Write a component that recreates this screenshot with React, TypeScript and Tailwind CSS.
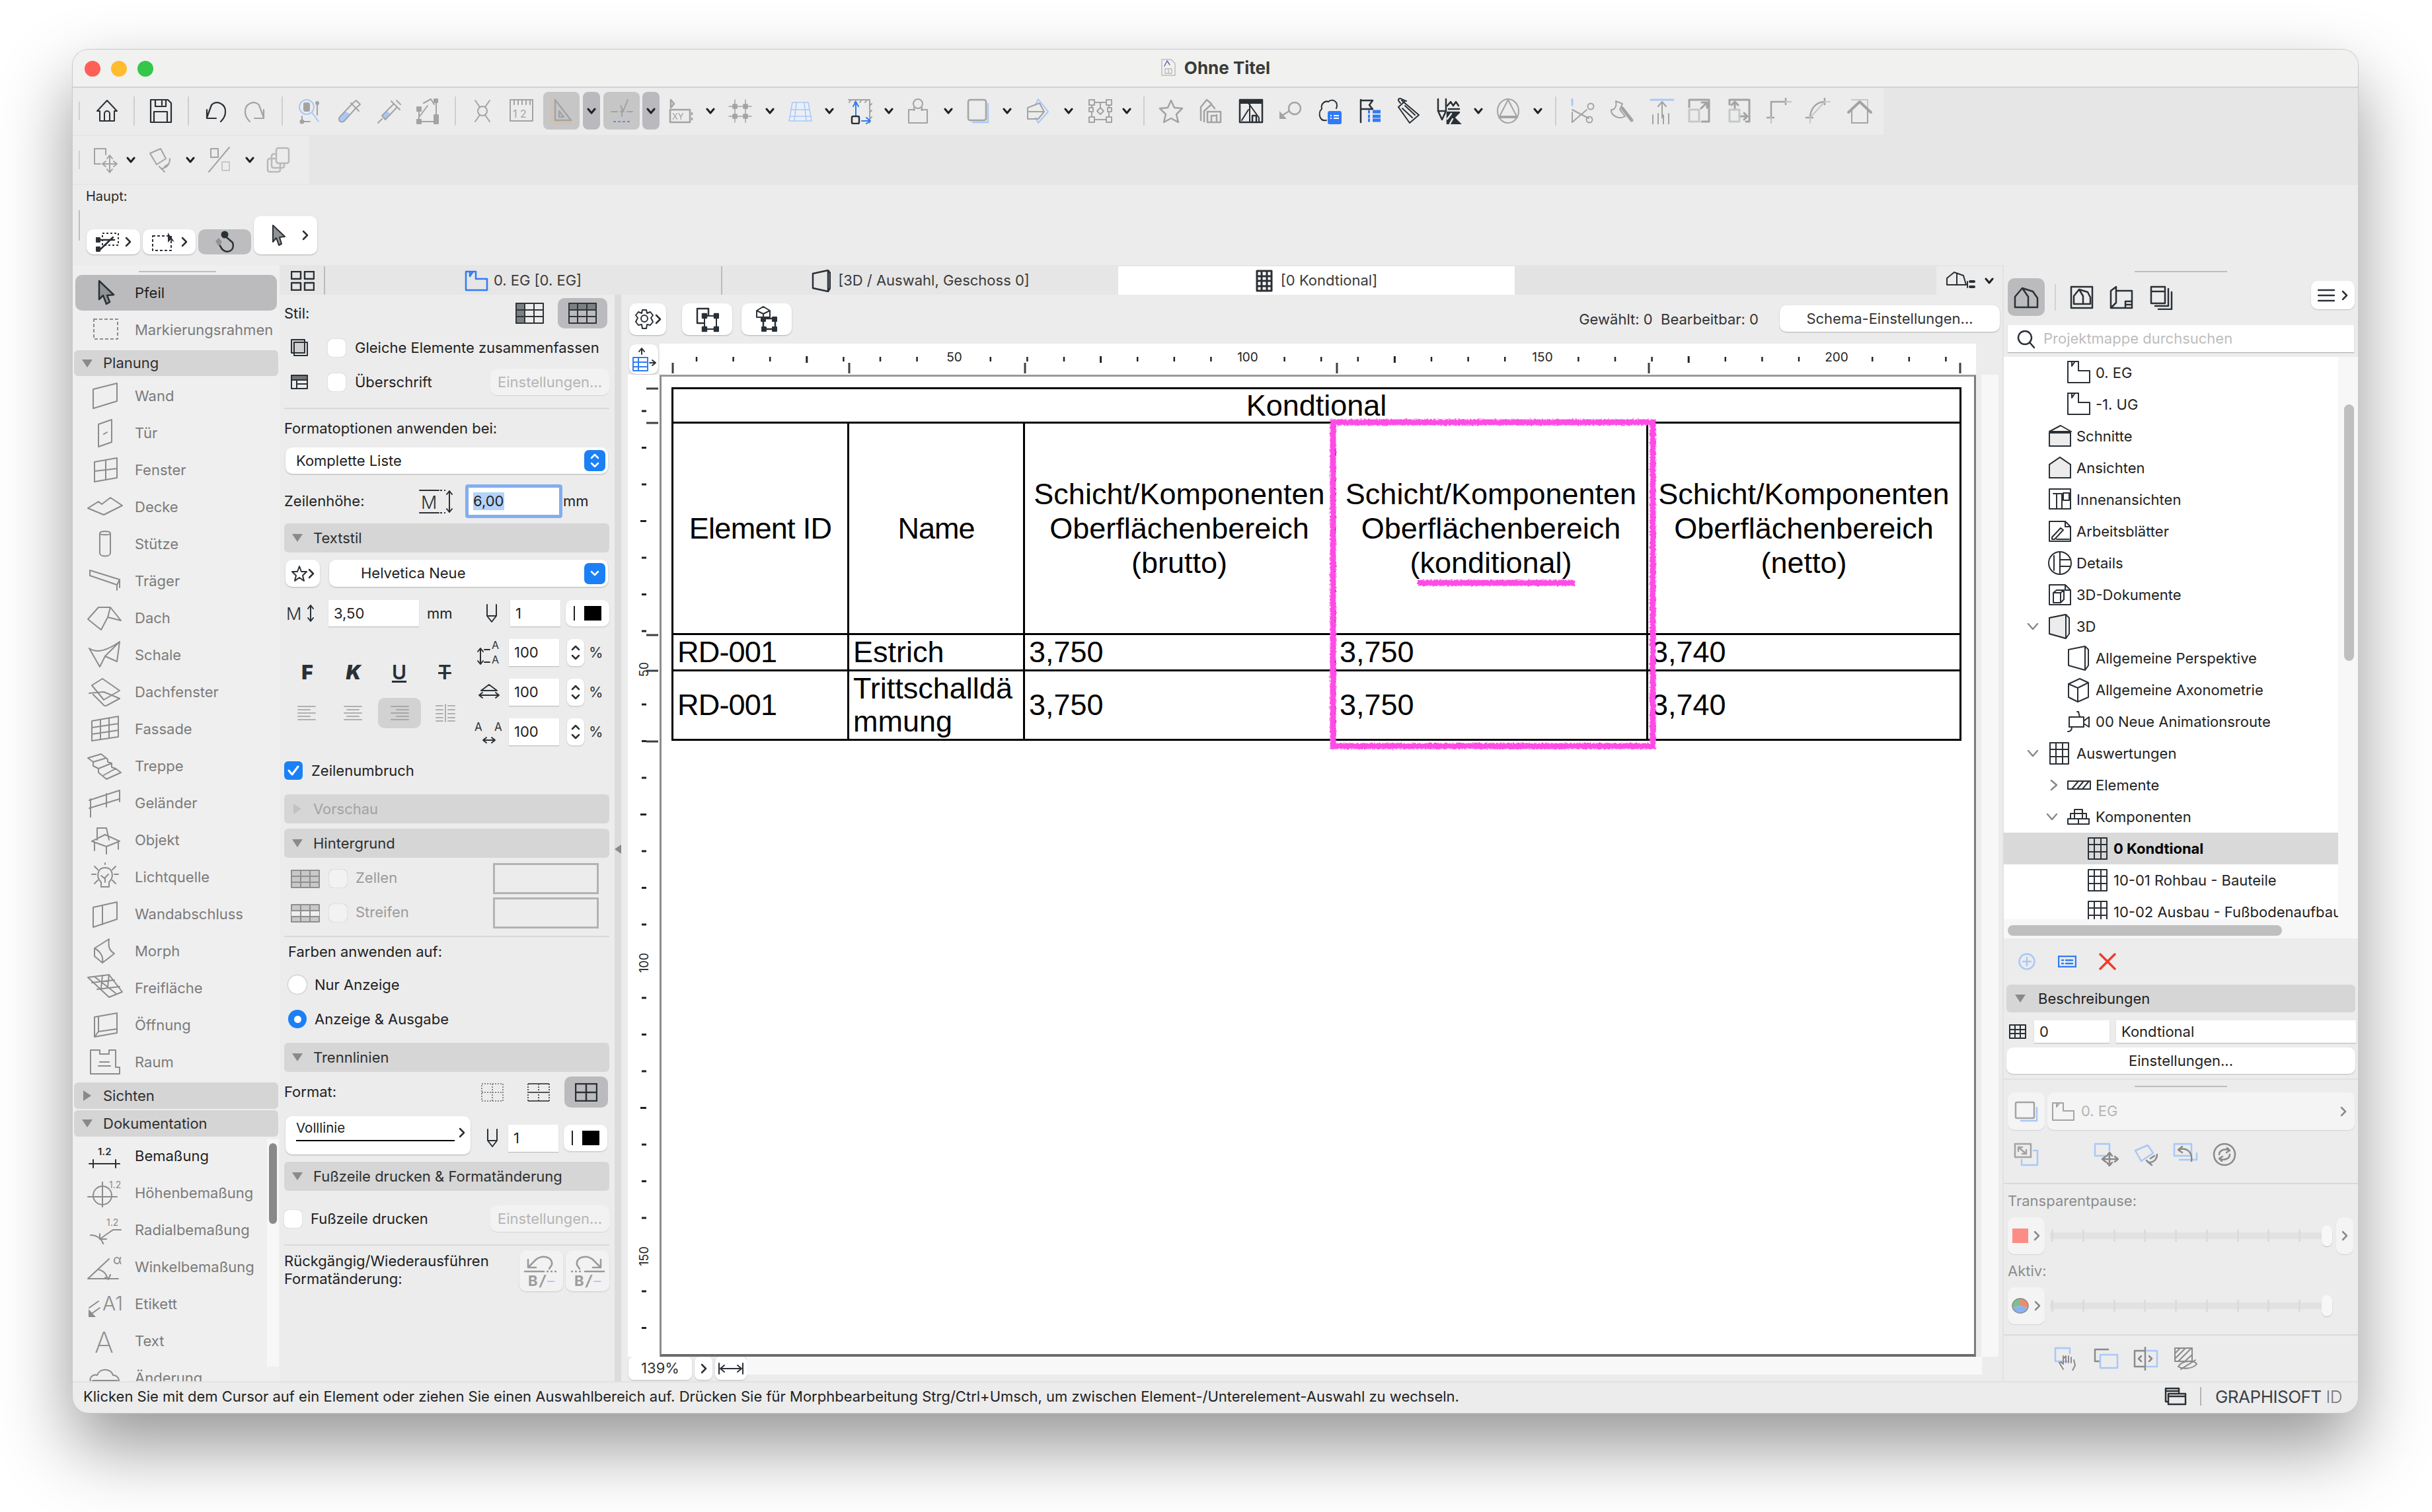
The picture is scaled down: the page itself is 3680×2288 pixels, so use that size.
import type { ReactNode } from 'react';

const DK = '#2a3036';
const GR = '#a3a3a3';
const LB = '#a9c8f7';
const BL = '#2f7bf6';
const TI = '#8c8c8c';

function S({ w = 40, h = 40, c = DK, sw = 2, d, children, className = '' }: { w?: number; h?: number; c?: string; sw?: number; d?: string; children?: ReactNode; className?: string }) {
  return (
    <svg width={w} height={h} viewBox={`0 0 ${w} ${h}`} fill="none" stroke={c} strokeWidth={sw} strokeLinecap="round" strokeLinejoin="round" className={`shrink-0 ${className}`}>
      {d && <path d={d} />}
      {children}
    </svg>
  );
}

const Tiny = ({ x, y, s, t, c, fw = 400 }: { x: number; y: number; s: number; t: string; c: string; fw?: number }) => (
  <text x={x} y={y} fontSize={s} fontWeight={fw} fill={c} stroke="none" fontFamily="Inter, sans-serif">{t}</text>
);

const Chev = () => <S w={14} h={10} sw={3} c="#1e2226" d="M2 2 L7 8 L12 2" />;
const Caret = ({ c = '#2a3036' }: { c?: string }) => <S w={10} h={16} sw={2.5} c={c} d="M2 2 L8 8 L2 14" />;

function Slot({ className, children }: { className: string; children?: ReactNode }) {
  return <div className={`flex items-center justify-center shrink-0 h-full ${className}`}>{children}</div>;
}
const TbDiv = ({ h = 'h-[44px]' }: { h?: string }) => <div className={`w-[2px] bg-[#cfcfcf] ${h}`} />;

const icons = {
  home: <S d="M20 4 L5 20 H9 V35 H31 V20 H35 Z M16 35 V24 A4 4 0 0 1 24 24 V35" />,
  save: <S d="M5 3 H31 L36 8 V37 H5 Z M12 3 V13 H28 V3 M22 5 V11 M10 37 V21 H30 V37" sw={2.2} />,
  undo: <S d="M7 30 L14 11 C20 3 36 8 35 22 C35 28 31 33 28 36 M7 18 V31 H21" sw={2.2} />,
  redo: <S c={GR} d="M33 30 L26 11 C20 3 4 8 5 22 C5 28 9 33 12 36 M33 18 V31 H19" sw={2.2} />,
  mag: <S c={GR}><circle cx="15" cy="14" r="11" stroke={LB} /><rect x="10" y="7" width="10" height="14" rx="3" fill={GR} stroke="none" /><path d="M23 22 L33 36" stroke={LB} /><path d="M31 8 V26 M8 28 V36 H20" /><circle cx="31" cy="8" r="2" fill={GR} /><circle cx="8" cy="36" r="2.5" fill={GR} /></S>,
  pip: <S c={GR}><path d="M5 29 L13 20 L21 25 L12 35 A4 4 0 0 1 5 29Z" fill={LB} stroke="none" /><path d="M30 4 L36 10 L30 15 L12 35 A4 4 0 0 1 5 29 L25 8 Z M22 8 L34 20" /></S>,
  syr: <S c={GR}><path d="M9 27 L17 20 L22 25 L14 33Z" fill={LB} stroke="none" /><path d="M3 38 L9 32 M9 27 L27 9 L32 14 L14 33 Z M23 5 L36 18 M31 4 L37 10" /></S>,
  ham: <S c={GR}><path d="M7 16 V36 H33 V4 M8 28 L20 12 M14 8 L25 2 L30 10" sw={2.5} /><rect x="4" y="14" width="6" height="6" fill={GR} /><rect x="30" y="2" width="5" height="5" fill={GR} /><rect x="30" y="26" width="6" height="6" fill={GR} /><rect x="4" y="33" width="6" height="6" fill={GR} /><rect x="30" y="33" width="6" height="6" fill={GR} /></S>,
  xc: <S c={GR} d="M9 4 L16 14 M31 4 L24 14 M9 36 L16 26 M31 36 L24 26"><circle cx="20" cy="20" r="7" /></S>,
  rul: <S c={GR} d="M3 3 H37 V35 H3 Z M9 3 V10 M15 3 V10 M21 3 V10 M27 3 V10 M33 3 V10"><Tiny x={7} y={30} s={16} t="1 2" c={GR} /></S>,
  tri: <S c={GR} d="M10 3 L10 34 H34 Z M16 20 V29 H23 Z" sw={2.5}><path d="M5 4 V38 H37" stroke="#e7b98d" strokeDasharray="3 3" strokeLinecap="butt" /></S>,
  snp: <S c={GR} d="M4 21 H13 M18 21 H23 M28 21 H36 M20 15 V28 M18 12 L22 20 L29 3"><path d="M7 36 H34" stroke={BL} strokeDasharray="4 3" strokeLinecap="butt" opacity="0.7" /></S>,
  xy: <S c={GR} d="M5 3 V15 L10 9 Z M4 18 H34 V37 H4 Z M37 23 V25 M37 31 V33" sw={2.5}><Tiny x={7} y={33} s={13} t="XY" c={GR} /></S>,
  grd: <S c={GR} sw={1.5} d="M12 3 V37 M28 3 V37 M3 13 H37 M3 28 H37"><rect x="9" y="10" width="6" height="6" fill={GR} /><rect x="25" y="10" width="6" height="6" fill={GR} /><rect x="9" y="25" width="6" height="6" fill={GR} /><rect x="25" y="25" width="6" height="6" fill={GR} /></S>,
  tbl: <S c={LB} sw={1.5}><path d="M8 7 H32 L37 35 H3 Z" fill="#eaeff7" /><path d="M14 7 L11 35 M26 7 L29 35 M6 18 H34 M4 28 H36" /></S>,
  ele: <S c={GR} d="M4 3 H36 M36 3 V38 M8 3 L5 7 M16 3 L13 7 M24 3 L21 7 M32 3 L29 7 M36 12 L39 9 M36 22 L39 19 M36 32 L39 29"><path d="M15 28 V8 M11 13 L15 6 L19 13 M24 35 H36 M31 30 L37 35 L31 39" stroke={BL} /><rect x="9" y="28" width="11" height="11" rx="2" stroke={DK} strokeWidth="2.5" /></S>,
  per: <S c={GR} d="M6 18 H15 M25 18 H34 M6 18 V38 H34 V18"><circle cx="20" cy="9" r="7" /><path d="M14 15 V19 M26 15 V19" /></S>,
  rct: <S c={GR} sw={2.5}><path d="M36 9 V37 H13" stroke={LB} /><rect x="6" y="3" width="27" height="31" rx="3" /></S>,
  rmb: <S c={GR} sw={2}><path d="M21 2 L36 21 L21 38 L17 30 M21 2 L17 10" stroke={LB} /><path d="M5 15 L23 8 L30 21 L21 32 L5 32 Z M5 21 H30" /></S>,
  nod: <S c={GR} d="M7 7 H33 V33 H7 Z M20 15 L25 20 L20 25 L15 20Z M20 7 V15"><rect x="3" y="3" width="8" height="8" fill="#ececec" /><rect x="29" y="3" width="8" height="8" fill="#ececec" /><rect x="3" y="29" width="8" height="8" fill="#ececec" /><rect x="29" y="29" width="8" height="8" fill="#ececec" /><rect x="3" y="15" width="6" height="6" fill="#ececec" /><rect x="31" y="15" width="6" height="6" fill="#ececec" /></S>,
  str: <S c={GR} sw={2.5} d="M20 4 L25 15 L37 16 L28 25 L31 37 L20 31 L9 37 L12 25 L3 16 L15 15 Z" />,
  hst: <S c={GR} sw={2.5} d="M6 34 V14 L15 3 L22 9 M11 36 V20 L22 10 L27 16 M16 37 V21 H36 V37 Z M22 37 V27 H28 M30 37 V26" />,
  hel: <S><rect x="3" y="3" width="34" height="34" strokeWidth="2.5" /><rect x="3" y="3" width="34" height="5" fill={DK} /><path d="M16 8 L32 30 V37 H18 V8 M6 34 L16 18" /><path d="M22 37 V27 H28 V37" strokeWidth="2.5" /></S>,
  key: <S c={GR} sw={2.5} d="M18 20 L8 26"><circle cx="26" cy="16" r="9" /><path d="M3 20 V32 H14 Z" fill={GR} stroke="none" /></S>,
  cld: <S><path d="M15 34 C4 36 2 22 8 17 C6 8 14 4 18 6 C24 0 34 6 30 16 M15 34" strokeWidth="2" /><rect x="17" y="20" width="21" height="20" rx="3" fill={BL} stroke="none" /><path d="M21 27 H23 M26 27 H34 M21 31 H23 M26 31 H34" stroke="#fff" strokeWidth="2" strokeLinecap="butt" /></S>,
  flg: <S d="M6 3 V37 M6 4 H24 L19 11 L24 17 H6" sw={2.5}><path d="M17 21 H20 M24 21 H36 M17 28 H20 M24 28 H36 M17 34 H20 M24 34 H36" stroke={BL} strokeWidth="5" strokeLinecap="butt" /></S>,
  tag: <S d="M8 8 C2 2 6 -1 12 3 L17 5 M10 4 L36 26 L22 38 L5 14 L14 6 M15 12 L30 26 M11 16 L26 30" sw={2} />,
  pen: <S d="M4 2 V20 L10 33 L16 20 V2 M4 20 H16 M18 12 L23 6 L27 12 L31 6 L35 12 M20 17 H36" sw={2.5}><path d="M18 22 H36 L28 30 L38 40 H18 Z" fill={DK} /><path d="M24 24 L18 32 M26 32 L22 39" stroke="#ececec" /></S>,
  cir: <S c={GR} d="M20 3 L33 28 H7 Z M6 30 H34"><ellipse cx="20" cy="20" rx="16" ry="18" /></S>,
  sci: <S c={GR} d="M4 18 L29 31 M4 37 L26 18 M4 22 V37"><path d="M4 2 V11" stroke={LB} strokeWidth="3" /><circle cx="32" cy="13" r="4.5" /><circle cx="30" cy="33" r="4.5" /></S>,
  axe: <S c={GR} d="M12 5 L22 9 L18 18 L26 28 C16 34 4 26 5 18 C9 19 14 14 12 5 Z"><path d="M22 16 L36 34" strokeWidth="5" /></S>,
  top: <S c={GR} d="M20 30 V6 M14 13 L20 6 L26 13 M6 26 V40 M14 24 V40 M22 26 V40 M30 24 V40" sw={2}><path d="M3 3 H37" stroke={LB} strokeWidth="3" /></S>,
  ext: <S c={GR} sw={3} d="M3 14 V3 H33 V36 H22 M21 16 L30 7 M22 7 H30 V15"><rect x="3" y="18" width="15" height="18" stroke="#c6c8c8" /></S>,
  est: <S c={GR} sw={3} d="M3 10 V3 H33 V36 H28 M11 18 V6 M6 11 L11 6 M16 11 L11 6 M18 28 H29 M25 23 L30 28 L25 33"><rect x="3" y="18" width="15" height="18" stroke="#c6c8c8" /></S>,
  cor: <S c={GR} sw={2.5} d="M8 30 V6 H30 M30 0 V10 M2 30 H12"><path d="M30 6 H38 M8 30 V38" stroke="#c6c8c8" /></S>,
  arc: <S c={GR} sw={2.5} d="M8 30 C8 16 18 6 30 6 M30 0 V10 M2 30 H12"><path d="M30 6 H38 M8 30 V38 M8 30 L30 6" stroke="#c6c8c8" strokeWidth="2" /></S>,
  hou: <S c={GR} d="M8 16 V38 H32 V16"><path d="M8 3 H32 V16" stroke="#c6c8c8" /><path d="M3 22 L20 6 L37 22" strokeWidth="4" /></S>,
  mov: <S c={GR} d="M14 26 H5 V3 H22 V12 M28 14 V38 M18 26 H38 M24 18 L28 13 L32 18 M24 34 L28 39 L32 34 M22 22 L17 26 L22 30 M34 22 L39 26 L34 30" />,
  rot: <S c={GR} d="M4 10 L20 3 L28 18 L14 27 Z M34 18 C34 26 30 32 22 33 M18 30 L22 34 L26 38 M26 30 L32 26" />,
  mir: <S c={GR} d="M3 38 L34 1"><rect x="6" y="3" width="11" height="13" /><rect x="23" y="23" width="11" height="13" stroke="#c6c8c8" /></S>,
  cop: <S c="#b9b9b9" sw={2.5}><rect x="4" y="18" width="19" height="20" rx="3" /><rect x="10" y="11" width="19" height="21" rx="3" /><rect x="17" y="2" width="19" height="23" rx="3" fill="#ececec" /></S>,
};

const tbBtn = 'rounded-[8px] bg-[#c6c6c6]';

function ToolbarOne() {
  return (
    <div className="flex h-[71px] bg-[#e6e6e6] shrink-0">
      <div className="flex items-center w-[2740px] h-full pb-[2px] bg-[#ececec]">
        <Slot className="w-[20px]"><TbDiv h="h-[28px]" /></Slot>
        <Slot className="w-[64px]">{icons.home}</Slot>
        <Slot className="w-[18px]"><TbDiv /></Slot>
        <Slot className="w-[62px]">{icons.save}</Slot>
        <Slot className="w-[22px]"><TbDiv /></Slot>
        <Slot className="w-[60px]">{icons.undo}</Slot>
        <Slot className="w-[60px]">{icons.redo}</Slot>
        <Slot className="w-[22px]"><TbDiv /></Slot>
        <Slot className="w-[62px]">{icons.mag}</Slot>
        <Slot className="w-[58px]">{icons.pip}</Slot>
        <Slot className="w-[62px]">{icons.syr}</Slot>
        <Slot className="w-[54px]">{icons.ham}</Slot>
        <Slot className="w-[30px]"><TbDiv /></Slot>
        <Slot className="w-[52px]">{icons.xc}</Slot>
        <Slot className="w-[66px]">{icons.rul}</Slot>
        <div className={`${tbBtn} flex items-center justify-center w-[55px] h-[57px]`}>{icons.tri}</div>
        <div className="flex items-center justify-center w-[26px] h-[57px] ml-[5px] rounded-[8px] bg-[#b9b9be]"><Chev /></div>
        <div className={`${tbBtn} flex items-center justify-center w-[55px] h-[57px] ml-[5px]`}>{icons.snp}</div>
        <div className="flex items-center justify-center w-[26px] h-[57px] ml-[4px] rounded-[8px] bg-[#b9b9be]"><Chev /></div>
        <Slot className="w-[64px]">{icons.xy}</Slot>
        <Slot className="w-[26px]"><Chev /></Slot>
        <Slot className="w-[64px]">{icons.grd}</Slot>
        <Slot className="w-[26px]"><Chev /></Slot>
        <Slot className="w-[66px]">{icons.tbl}</Slot>
        <Slot className="w-[22px]"><Chev /></Slot>
        <Slot className="w-[68px]">{icons.ele}</Slot>
        <Slot className="w-[22px]"><Chev /></Slot>
        <Slot className="w-[66px]">{icons.per}</Slot>
        <Slot className="w-[26px]"><Chev /></Slot>
        <Slot className="w-[62px]">{icons.rct}</Slot>
        <Slot className="w-[28px]"><Chev /></Slot>
        <Slot className="w-[64px]">{icons.rmb}</Slot>
        <Slot className="w-[30px]"><Chev /></Slot>
        <Slot className="w-[66px]">{icons.nod}</Slot>
        <Slot className="w-[14px]"><Chev /></Slot>
        <Slot className="w-[38px]"><TbDiv /></Slot>
        <Slot className="w-[44px]">{icons.str}</Slot>
        <Slot className="w-[74px]">{icons.hst}</Slot>
        <Slot className="w-[50px]">{icons.hel}</Slot>
        <Slot className="w-[70px]">{icons.key}</Slot>
        <Slot className="w-[48px]">{icons.cld}</Slot>
        <Slot className="w-[74px]">{icons.flg}</Slot>
        <Slot className="w-[42px]">{icons.tag}</Slot>
        <Slot className="w-[80px]">{icons.pen}</Slot>
        <Slot className="w-[10px]"><Chev /></Slot>
        <Slot className="w-[80px]">{icons.cir}</Slot>
        <Slot className="w-[10px]"><Chev /></Slot>
        <Slot className="w-[44px]"><TbDiv /></Slot>
        <Slot className="w-[38px]">{icons.sci}</Slot>
        <Slot className="w-[78px]">{icons.axe}</Slot>
        <Slot className="w-[46px]">{icons.top}</Slot>
        <Slot className="w-[70px]">{icons.ext}</Slot>
        <Slot className="w-[52px]">{icons.est}</Slot>
        <Slot className="w-[64px]">{icons.cor}</Slot>
        <Slot className="w-[54px]">{icons.arc}</Slot>
        <Slot className="w-[72px]">{icons.hou}</Slot>
      </div>
    </div>
  );
}

function ToolbarTwo() {
  return (
    <div className="h-[76px] bg-[#e6e6e6] pt-[2px] shrink-0">
      <div className="flex items-center w-[358px] h-[72px] bg-[#ececec]">
        <Slot className="w-[20px]"><TbDiv h="h-[28px]" /></Slot>
        <Slot className="w-[56px]">{icons.mov}</Slot>
        <Slot className="w-[24px]"><Chev /></Slot>
        <Slot className="w-[66px]">{icons.rot}</Slot>
        <Slot className="w-[24px]"><Chev /></Slot>
        <Slot className="w-[66px]">{icons.mir}</Slot>
        <Slot className="w-[24px]"><Chev /></Slot>
        <Slot className="w-[62px]">{icons.cop}</Slot>
      </div>
    </div>
  );
}

function HauptRow() {
  const white = 'flex items-center justify-center bg-white rounded-[10px] shadow-[0_1px_2px_rgba(0,0,0,0.25)]';
  return (
    <div className="relative h-[121px] bg-[#ececec] shrink-0">
      <div className="pl-[20px] pt-[5px] text-[20px] leading-[24px] text-[#2a2a2a]">Haupt:</div>
      <div className="absolute left-[9px] top-[38px] w-[2px] h-[46px] bg-[#bdbdbd]" />
      <div className="absolute left-[21px] top-[47px] flex items-end gap-[4px]">
        <div className={`${white} gap-[8px] w-[81px] h-[38px]`}>
          <S w={36} h={30}><rect x="10" y="2" width="24" height="18" strokeDasharray="3 3" strokeLinecap="butt" /><path d="M2 12 H28 M5 28 L26 8" strokeWidth="2.5" /><rect x="0" y="9" width="6" height="6" fill={DK} /><rect x="1" y="23" width="5" height="6" fill={DK} /></S>
          <Caret />
        </div>
        <div className={`${white} gap-[8px] w-[80px] h-[38px]`}>
          <S w={38} h={30}><rect x="3" y="6" width="28" height="22" strokeDasharray="4 3" strokeLinecap="butt" /><path d="M26 1 L26 16 L30 12 L36 15 L31 8 Z" fill={DK} stroke="none" /></S>
          <Caret />
        </div>
        <div className="flex items-center justify-center w-[80px] h-[38px] rounded-[10px] bg-[#bdbdbf]">
          <S w={36} h={34}><path d="M16 6 L30 18 C34 30 22 36 14 28 L8 18" strokeWidth="2.5" /><circle cx="18" cy="6" r="4.5" fill={DK} /><path d="M4 16 L9 11 L14 17 L9 24 Z" fill="#8f9394" stroke="none" /></S>
        </div>
        <div className={`${white} gap-[24px] w-[96px] h-[58px] pl-[12px]`}>
          <S w={24} h={34}><path d="M4 2 V27 L9 21 L13 32 L17 30 L14 20 L22 19 Z" fill="#8f9394" /></S>
          <Caret />
        </div>
      </div>
    </div>
  );
}

function Tool({ icon, t, dark }: { icon: ReactNode; t: string; dark?: boolean }) {
  return (
    <div className="flex items-center h-[56px] shrink-0">
      <div className="flex items-center justify-center w-[56px] h-[44px] ml-[21px] mr-[17px] shrink-0">{icon}</div>
      <span className={`text-[22px] whitespace-nowrap ${dark ? 'text-[#1f1f1f]' : 'text-[#7b7b7b]'}`}>{t}</span>
    </div>
  );
}

function TriDown({ c = '#8a8a8a' }: { c?: string }) {
  return <svg width="18" height="14" viewBox="0 0 18 14" className="shrink-0"><path d="M1 1 H17 L9 13 Z" fill={c} /></svg>;
}
function TriRight({ c = '#8a8a8a' }: { c?: string }) {
  return <svg width="14" height="18" viewBox="0 0 14 18" className="shrink-0"><path d="M1 1 V17 L13 9 Z" fill={c} /></svg>;
}

const TB = ({ d, children }: { d?: string; children?: ReactNode }) => <S w={56} h={44} c={TI} d={d}>{children}</S>;

const planung: [string, ReactNode][] = [
  ['Wand', <TB d="M10 12 L46 3 V30 L10 41 Z" />],
  ['Tür', <TB d="M18 9 L38 2 V36 L18 43 Z M26 24 L31 21" />],
  ['Fenster', <TB d="M12 10 L46 4 V34 L12 40 Z M29 7 V37 M12 24 L46 20" />],
  ['Decke', <TB d="M2 24 L18 14 L23 18 L36 8 L54 20 L26 34 Z" />],
  ['Stütze', <TB d="M20 6 C20 2 36 2 36 6 V36 C36 42 20 42 20 36 Z M20 6 C20 9 36 9 36 6" />],
  ['Träger', <TB d="M5 6 L50 20 V32 M5 6 V14 L46 28 V36 M46 28 L50 20 M5 6 L50 20" />],
  ['Dach', <TB d="M2 24 L18 6 H36 L52 26 L32 21 L22 40 Z M36 6 L32 21" />],
  ['Schale', <TB d="M4 12 L20 40 L28 24 L50 2 L46 32 L28 24 M4 12 C18 22 36 12 50 2" />],
  ['Dachfenster', <TB d="M4 24 L26 22 L50 32 L28 44 L10 26 M8 12 L24 2 L50 20 L26 34 Z" />],
  ['Fassade', <TB d="M8 10 L48 3 V34 L8 40 Z M8 20 L48 14 M8 30 L48 24 M21 8 V38 M34 6 V36" />],
  ['Treppe', <TB d="M2 10 L22 4 L32 12 V16 L38 18 V24 L44 26 L52 32 L30 42 L18 32 V26 L10 22 V16 Z M10 16 L30 10 M18 26 L38 18 M26 36 L44 26" />],
];
const planung2: [string, ReactNode][] = [
  ['Geländer', <TB d="M4 18 L50 3 M4 30 L50 16 M6 16 V44 M30 8 V28 M50 3 V20" />],
  ['Objekt', <TB d="M16 4 H30 L34 22 M16 4 V22 M8 24 L28 14 L50 24 L30 32 Z M12 26 V38 M30 32 V44 M48 24 V36" />],
  ['Lichtquelle', <TB d="M22 30 C14 22 16 8 28 8 C40 8 42 22 34 30 V37 H22 Z M22 20 L27 24 L33 18 M28 24 V30 M8 18 H14 M42 18 H48 M12 6 L17 11 M44 6 L39 11 M12 32 L17 27 M44 32 L39 27 M28 1 V3" />],
  ['Wandabschluss', <TB d="M10 12 L46 4 V30 L10 42 Z M24 9 V38" />],
  ['Morph', <TB d="M12 18 L34 4 C32 18 36 22 42 26 L24 40 L12 30 Z M12 18 C20 22 26 30 24 40" />],
  ['Freifläche', <TB d="M2 6 L34 2 L54 28 L34 36 Z M12 5 L44 30 M24 3 L22 22 M34 2 L32 20 M8 14 L42 10 M16 24 L50 20" />],
  ['Öffnung', <TB d="M12 10 L46 4 V34 L12 40 Z M18 10 V32 L46 28 M12 40 L18 32" />],
  ['Raum', <TB d="M6 4 H20 V10 H34 V4 H44 V30 H50 V40 H6 Z M20 22 H34 M18 28 H36" />],
];
const doku: [string, ReactNode, boolean?][] = [
  ['Bemaßung', <S w={56} h={44} d="M4 34 H50 M10 28 V40 M44 28 V40"><text x="17" y="21" fontSize="15" fontWeight="600" fill={DK} stroke="none" fontFamily="Inter, sans-serif">1.2</text></S>, true],
  ['Höhenbemaßung', <TB d="M2 28 H46 M24 6 V46"><circle cx="24" cy="26" r="14" /><Tiny x={34} y={15} s={14} t="1.2" c={TI} /></TB>],
  ['Radialbemaßung', <TB d="M6 30 C16 30 24 36 26 46 M20 36 L40 22 H52 M20 28 V36 H30"><Tiny x={30} y={16} s={14} t="1.2" c={TI} /></TB>],
  ['Winkelbemaßung', <TB d="M2 40 L34 10 M2 40 H48 M18 26 C26 28 30 32 32 40 M28 38 L33 41 L36 34"><Tiny x={40} y={18} s={20} t="α" c={TI} /></TB>],
  ['Etikett', <TB d="M20 28 L6 38 M18 18 L4 28"><path d="M3 42 L3 30 L14 42 Z" fill={TI} stroke="none" /><Tiny x={24} y={32} s={30} t="A1" c={TI} fw={300} /></TB>],
  ['Text', <TB><Tiny x={12} y={40} s={44} t="A" c={TI} fw={200} /></TB>],
  ['Änderung', <TB d="M8 30 C2 24 8 16 16 18 C20 6 38 8 40 18 C48 18 52 28 46 30 Z"><rect x="8" y="26" width="40" height="14" rx="3" /></TB>],
];

function Toolbox() {
  return (
    <div className="flex flex-col w-[313px] h-full bg-[#efefef] overflow-hidden shrink-0">
      <div className="w-[117px] h-[2px] bg-[#bdbdbd] ml-[100px] mt-[9px] mb-[4px] shrink-0" />
      <div className="flex items-center h-[54px] mx-[4px] rounded-[10px] bg-[#bbbbbe] shrink-0">
        <div className="flex items-center justify-center w-[56px] h-[44px] ml-[17px] mr-[17px]"><S w={30} h={40}><path d="M6 2 V30 L12 24 L17 37 L22 34 L18 24 L28 23 Z" fill="#8f9394" strokeWidth="2.5" /></S></div>
        <span className="text-[22px] text-[#1f1f1f]">Pfeil</span>
      </div>
      <div className="shrink-0 mt-[1px]">
        <Tool t="Markierungsrahmen" icon={<TB><rect x="11" y="6" width="36" height="30" strokeDasharray="5 3" strokeLinecap="butt" /></TB>} />
      </div>
      <div className="flex items-center h-[39px] mt-[3px] mx-[2px] rounded-[6px] bg-[#d5d5d5] shrink-0 pl-[11px]">
        <TriDown /><span className="ml-[15px] text-[22px] text-[#2f2f2f]">Planung</span>
      </div>
      <div className="mt-[2px] shrink-0">
        {planung.map(([t, i]) => <Tool key={t} t={t} icon={i} />)}
        {planung2.map(([t, i]) => <Tool key={t} t={t} icon={i} />)}
      </div>
      <div className="flex items-center h-[40px] mt-[3px] mx-[2px] rounded-[6px] bg-[#d5d5d5] shrink-0 pl-[13px]">
        <TriRight /><span className="ml-[17px] text-[22px] text-[#2f2f2f]">Sichten</span>
      </div>
      <div className="flex items-center h-[40px] mt-[2px] mx-[2px] rounded-[6px] bg-[#d5d5d5] shrink-0 pl-[11px]">
        <TriDown /><span className="ml-[15px] text-[22px] text-[#2f2f2f]">Dokumentation</span>
      </div>
      <div className="relative mt-[1px] flex-1 overflow-hidden">
        {doku.map(([t, i, d]) => <Tool key={t} t={t} icon={i} dark={d} />)}
        <div className="absolute right-[1px] top-[3px] w-[18px] h-[344px] bg-[#f7f7f7]">
          <div className="w-[12px] h-[122px] mt-[6px] ml-[3px] rounded-full bg-[#8a8a8a]" />
        </div>
      </div>
    </div>
  );
}

/* settings panel parts */
const Check = ({ dim }: { dim?: boolean }) => <div className={`w-[27px] h-[27px] rounded-[6px] shrink-0 shadow-[0_0_1px_rgba(0,0,0,0.45)] ${dim ? 'bg-[#f2f2f2]' : 'bg-white'}`} />;

function Sec({ t, dim, closed, className = '' }: { t: string; dim?: boolean; closed?: boolean; className?: string }) {
  return (
    <div className={`flex items-center h-[44px] rounded-[6px] bg-[#d6d6d6] pl-[11px] shrink-0 ${className}`}>
      <div className="flex items-center justify-center w-[18px]">{closed ? <TriRight c="#c2c2c2" /> : <TriDown />}</div>
      <span className={`ml-[15px] text-[22px] ${dim ? 'text-[#a3a3a3]' : 'text-[#2f2f2f]'}`}>{t}</span>
    </div>
  );
}
const Sep = ({ className }: { className: string }) => <div className={`h-[2px] bg-[#d9d9d9] shrink-0 ${className}`} />;
const Field = ({ v, className }: { v: string; className: string }) => (
  <div className={`flex items-center bg-white pl-[8px] text-[22px] text-[#222] shrink-0 shadow-[0_1px_1px_rgba(0,0,0,0.2)] ${className}`}>{v}</div>
);
const Btn = ({ t, className = '' }: { t: string; className?: string }) => (
  <div className={`flex items-center justify-center rounded-[10px] bg-[#f2f2f2] text-[22px] text-[#b5b5b5] shadow-[0_1px_1px_rgba(0,0,0,0.1)] shrink-0 ${className}`}>{t}</div>
);
const ColorBtn = () => (
  <div className="flex items-center justify-center gap-[14px] w-[66px] h-[40px] rounded-[10px] bg-white shadow-[0_1px_2px_rgba(0,0,0,0.2)] shrink-0">
    <div className="w-[2px] h-[22px] bg-[#222]" />
    <div className="w-[26px] h-[22px] bg-black" />
  </div>
);
const Stepper = () => (
  <div className="flex flex-col items-center justify-center gap-[5px] w-[26px] h-[41px] rounded-[8px] bg-white shadow-[0_1px_2px_rgba(0,0,0,0.2)] shrink-0 ml-[12px]">
    <S w={14} h={9} sw={2.5} d="M2 7 L7 2 L12 7" />
    <S w={14} h={9} sw={2.5} d="M2 2 L7 7 L12 2" />
  </div>
);
const Pen = () => <S w={18} h={30} sw={2} d="M2 2 V19 L9 28 L16 19 V2 M2 19 H16" />;
const Percent = () => <span className="ml-[7px] text-[22px] text-[#333]">%</span>;

const MGlyph = () => (
  <S w={52} h={38} sw={2} d="M1 2 H30 M1 36 H30"><path d="M32 2 H40 M32 36 H40" strokeDasharray="3 3" strokeLinecap="butt" /><Tiny x={3} y={30} s={27} t="M" c={DK} fw={300} /><path d="M46 3 V35 M42 8 L46 3 L50 8 M42 30 L46 35 L50 30" /></S>
);

function StylePanel() {
  return (
    <div className="flex flex-col w-[507px] h-full bg-[#ececec] pl-[7px] pr-[8px] overflow-hidden shrink-0 text-[22px] text-[#222]">
      <div className="flex items-center h-[46px] mt-[5px] shrink-0">
        <span>Stil:</span>
        <div className="ml-auto mr-[21px]">
          <S w={43} h={32} c="#2f3538"><rect x="1" y="1" width="41" height="30" /><rect x="1" y="1" width="13" height="10" fill="#7b8082" /><rect x="1" y="11" width="13" height="10" fill="#7b8082" /><rect x="1" y="21" width="13" height="10" fill="#7b8082" /><path d="M14 1 V31 M28 1 V31 M1 11 H42 M1 21 H42" /></S>
        </div>
        <div className="flex items-center justify-center w-[75px] h-[46px] rounded-[10px] bg-[#bbbbbe] mr-[3px]">
          <S w={43} h={32} c="#2f3538"><rect x="1" y="1" width="41" height="30" /><rect x="1" y="1" width="41" height="10" fill="#7b8082" /><path d="M14 1 V31 M28 1 V31 M1 11 H42 M1 21 H42" /></S>
        </div>
      </div>
      <div className="flex items-center h-[40px] mt-[9px] pl-[10px] shrink-0">
        <S w={26} h={26} sw={2}><rect x="1" y="1" width="20" height="20" fill="#d0d0d0" /><rect x="5" y="5" width="20" height="20" /></S>
        <div className="ml-[30px]"><Check /></div>
        <span className="ml-[14px] whitespace-nowrap">Gleiche Elemente zusammenfassen</span>
      </div>
      <div className="flex items-center h-[40px] mt-[12px] pl-[10px] shrink-0">
        <S w={26} h={22} sw={2}><rect x="1" y="1" width="24" height="20" /><rect x="1" y="1" width="24" height="7" fill="#6f7577" /><path d="M9 8 V21 M9 14 H25" /></S>
        <div className="ml-[30px]"><Check /></div>
        <span className="ml-[14px]">Überschrift</span>
        <Btn t="Einstellungen..." className="ml-auto w-[180px] h-[40px]" />
      </div>
      <Sep className="mt-[19px]" />
      <div className="h-[28px] mt-[15px] leading-[28px] shrink-0">Formatoptionen anwenden bei:</div>
      <div className="flex items-center justify-between w-[488px] h-[40px] mt-[15px] ml-[2px] rounded-[10px] bg-white shadow-[0_1px_2px_rgba(0,0,0,0.25)] pl-[16px] pr-[4px] shrink-0">
        <span>Komplette Liste</span>
        <div className="flex flex-col items-center justify-center gap-[4px] w-[32px] h-[32px] rounded-[7px] bg-[#1b80f5]">
          <S w={16} h={9} c="#fff" sw={2.5} d="M3 7 L8 2 L13 7" />
          <S w={16} h={9} c="#fff" sw={2.5} d="M3 2 L8 7 L13 2" />
        </div>
      </div>
      <div className="flex items-center h-[51px] mt-[16px] shrink-0">
        <span className="w-[204px]">Zeilenhöhe:</span>
        <MGlyph />
        <div className="flex items-center w-[147px] h-[51px] ml-[18px] border-[5px] border-[#83aef0] rounded-[4px] bg-white pl-[7px] shrink-0">
          <span className="bg-[#b3d3fb] h-[27px] leading-[27px] pr-[1px]">6,00</span>
        </div>
        <span className="ml-[1px]">mm</span>
      </div>
      <Sec t="Textstil" className="mt-[8px]" />
      <div className="flex items-center h-[41px] mt-[11px] shrink-0">
        <div className="flex items-center justify-center w-[52px] h-[41px] ml-[2px] rounded-[10px] bg-white shadow-[0_1px_2px_rgba(0,0,0,0.25)] shrink-0">
          <S w={26} h={26} sw={2} d="M13 2 L16 10 L24 10 L18 16 L20 24 L13 19 L6 24 L8 16 L2 10 L10 10 Z" />
          <Caret />
        </div>
        <div className="flex items-center justify-between w-[422px] h-[41px] ml-[14px] rounded-[10px] bg-white shadow-[0_1px_2px_rgba(0,0,0,0.25)] pl-[48px] pr-[4px] shrink-0">
          <span>Helvetica Neue</span>
          <div className="flex items-center justify-center w-[32px] h-[32px] rounded-[7px] bg-[#1b80f5]"><S w={16} h={10} c="#fff" sw={2.5} d="M3 2 L8 7 L13 2" /></div>
        </div>
      </div>
      <div className="flex items-center h-[40px] mt-[20px] shrink-0">
        <div className="ml-[3px] w-[64px]"><S w={44} h={30} sw={2}><Tiny x={0} y={25} s={26} t="M" c={DK} fw={300} /><path d="M37 3 V27 M33 8 L37 3 L41 8 M33 22 L37 27 L41 22" /></S></div>
        <Field v="3,50" className="w-[137px] h-[40px]" />
        <span className="ml-[12px] w-[89px]">mm</span>
        <Pen />
        <Field v="1" className="w-[76px] h-[40px] ml-[19px]" />
        <div className="ml-[8px]"><ColorBtn /></div>
      </div>
      <div className="flex h-[161px] mt-[19px] shrink-0">
        <div className="relative w-[280px]">
          <div className="flex items-center h-[44px] mt-[28px] text-[#2a3036]">
            <span className="w-[70px] text-center text-[30px] font-black">F</span>
            <span className="w-[70px] text-center text-[30px] font-black italic">K</span>
            <span className="w-[68px] text-center text-[30px] font-semibold underline">U</span>
            <span className="w-[70px] text-center text-[30px] font-semibold line-through">T</span>
          </div>
          <div className="flex items-center h-[46px] mt-[17px]">
            <div className="w-[28px] ml-[20px]"><S w={28} h={24} c="#b0b0b0" sw={2} d="M1 2 H27 M1 7 H19 M1 12 H27 M1 17 H19 M1 22 H27" /></div>
            <div className="w-[28px] ml-[42px]"><S w={28} h={24} c="#b0b0b0" sw={2} d="M1 2 H27 M5 7 H23 M1 12 H27 M5 17 H23 M1 22 H27" /></div>
            <div className="flex items-center justify-center w-[65px] h-[46px] rounded-[10px] bg-[#d2d2d2] ml-[24px]">
              <S w={28} h={24} c="#a8a8a8" sw={2} d="M1 2 H27 M9 7 H27 M1 12 H27 M9 17 H27 M1 22 H27" />
            </div>
            <div className="ml-[22px]"><S w={30} h={28} c="#b0b0b0" sw={2} d="M1 3 H11 M1 9 H11 M1 15 H11 M1 21 H11 M1 26 H11 M19 3 H29 M19 9 H29 M19 15 H29 M19 21 H29 M19 26 H29 M15 1 V27" /></div>
          </div>
        </div>
        <div className="flex flex-col gap-[19px]">
          {[
            <S w={40} h={40} sw={2}><Tiny x={24} y={14} s={16} t="A" c={DK} /><Tiny x={24} y={36} s={16} t="A" c={DK} /><path d="M7 14 V36 M3 18 L7 13 L11 18 M3 32 L7 37 L11 32 M13 15 H21 M13 34 H21" /></S>,
            <S w={40} h={40} sw={2} d="M8 17 L20 8 L32 17 H8 Z M6 24 H34 M10 20 L5 24 L10 28 M30 20 L35 24 L30 28" />,
            <S w={44} h={40} sw={2} d="M14 32 H30 M18 28 L13 32 L18 36 M26 28 L31 32 L26 36"><Tiny x={0} y={18} s={17} t="A" c={DK} /><Tiny x={30} y={18} s={17} t="A" c={DK} /></S>,
          ].map((ic, i) => (
            <div key={i} className="flex items-center h-[41px]">
              <div className="w-[60px] flex justify-center">{ic}</div>
              <Field v="100" className="w-[76px] h-[41px]" />
              <Stepper />
              <Percent />
            </div>
          ))}
        </div>
      </div>
      <div className="flex items-center h-[28px] mt-[24px] shrink-0">
        <div className="flex items-center justify-center w-[28px] h-[28px] rounded-[6px] bg-[#1b80f5]"><S w={20} h={18} c="#fff" sw={3} d="M3 9 L8 15 L17 3" /></div>
        <span className="ml-[13px]">Zeilenumbruch</span>
      </div>
      <Sec t="Vorschau" dim closed className="mt-[22px]" />
      <Sec t="Hintergrund" className="mt-[8px]" />
      {['Zellen', 'Streifen'].map((t, i) => (
        <div key={t} className={`flex items-center h-[47px] shrink-0 pl-[10px] text-[#9b9b9b] ${i === 0 ? 'mt-[8px]' : 'mt-[5px]'}`}>
          <S w={44} h={28} c="#8f8f8f" sw={2}>
            <rect x="1" y="1" width="42" height="26" fill="#c9c9c9" />
            {i === 1 && <rect x="1" y="10" width="42" height="8" fill="#f0f0f0" stroke="none" />}
            <path d="M15 1 V27 M29 1 V27 M1 10 H43 M1 19 H43" />
          </S>
          <div className="ml-[14px]"><Check dim /></div>
          <span className="ml-[13px] -mt-[2px]">{t}</span>
          <div className="ml-auto mr-[16px] w-[160px] h-[47px] border-[3px] border-[#b3b3b3] bg-[#ececec]" />
        </div>
      ))}
      <Sep className="mt-[11px]" />
      <div className="h-[28px] mt-[8px] ml-[6px] leading-[28px] shrink-0">Farben anwenden auf:</div>
      <div className="flex items-center h-[28px] mt-[22px] ml-[6px] shrink-0">
        <div className="w-[28px] h-[28px] rounded-full bg-white shadow-[0_0_2px_rgba(0,0,0,0.45)]" />
        <span className="ml-[12px]">Nur Anzeige</span>
      </div>
      <div className="flex items-center h-[28px] mt-[24px] ml-[6px] shrink-0">
        <div className="flex items-center justify-center w-[28px] h-[28px] rounded-full bg-[#1b80f5]"><div className="w-[11px] h-[11px] rounded-full bg-white" /></div>
        <span className="ml-[12px]">Anzeige &amp; Ausgabe</span>
      </div>
      <Sec t="Trennlinien" className="mt-[22px]" />
      <div className="flex items-center h-[47px] mt-[7px] shrink-0">
        <span>Format:</span>
        <div className="ml-auto mr-[36px]"><S w={34} h={28} c="#8a8a8a" sw={2}><rect x="1" y="1" width="32" height="26" strokeDasharray="2 2" strokeLinecap="butt" /><path d="M17 1 V27 M1 14 H33" strokeDasharray="2 2" strokeLinecap="butt" /></S></div>
        <div className="mr-[22px]"><S w={34} h={28} c="#555" sw={2}><path d="M1 1 H33 M1 14 H33 M1 27 H33" strokeLinecap="butt" /><path d="M1 1 V27 M17 1 V27 M33 1 V27" strokeDasharray="2 2" strokeLinecap="butt" /></S></div>
        <div className="flex items-center justify-center w-[66px] h-[47px] rounded-[10px] bg-[#bbbbbe] mr-[2px]"><S w={34} h={28} sw={2.5} d="M1 1 H33 V27 H1 Z M17 1 V27 M1 14 H33" /></div>
      </div>
      <div className="flex items-center h-[58px] mt-[13px] shrink-0">
        <div className="relative w-[280px] h-[58px] ml-[2px] rounded-[10px] bg-white shadow-[0_1px_2px_rgba(0,0,0,0.25)] shrink-0">
          <div className="pl-[16px] pt-[6px] text-[20.5px] leading-[24px]">Volllinie</div>
          <div className="h-[2px] w-[240px] ml-[16px] mt-[6px] bg-black" />
          <div className="absolute right-[8px] top-[17px]"><Caret /></div>
        </div>
        <div className="ml-[24px] mt-[8px]"><Pen /></div>
        <Field v="1" className="w-[76px] h-[41px] ml-[15px] mt-[8px]" />
        <div className="ml-[8px] mt-[8px]"><ColorBtn /></div>
      </div>
      <Sec t="Fußzeile drucken & Formatänderung" className="mt-[11px]" />
      <div className="flex items-center h-[40px] mt-[22px] shrink-0">
        <Check />
        <span className="ml-[13px]">Fußzeile drucken</span>
        <Btn t="Einstellungen..." className="ml-auto w-[180px] h-[40px]" />
      </div>
      <Sep className="mt-[19px]" />
      <div className="flex h-[62px] mt-[7px] shrink-0">
        <div className="pt-[3px] text-[22px] leading-[27px] whitespace-nowrap">Rückgängig/Wiederausführen<br />Formatänderung:</div>
        <div className="ml-auto flex gap-[4px]">
          {[0, 1].map(i => (
            <div key={i} className="flex flex-col items-center w-[66px] h-[62px] rounded-[10px] bg-[#f2f2f2] shadow-[0_1px_2px_rgba(0,0,0,0.15)] pt-[4px]">
              <S w={56} h={30} c="#9a9a9a" sw={2.5} d={i === 0 ? 'M8 10 L8 22 H20 M8 22 L20 10 C30 2 46 6 44 18 L40 24 M3 28 H32' : 'M48 10 V22 H36 M48 22 L36 10 C26 2 10 6 12 18 L16 24 M24 28 H53'}><path d={i === 0 ? 'M36 28 H53' : 'M3 28 H20'} strokeDasharray="3 3" strokeLinecap="butt" /></S>
              <div className="flex items-center gap-[3px] text-[22px] leading-[24px] font-bold text-[#9c9c9c]"><span>B</span><span className="italic">/</span><span className="text-[#a9c8f7] font-normal">–</span></div>
            </div>
          ))}
        </div>
      </div>
    </div>
  );
}

/* ruler ticks */
const hTicks = Array.from({ length: 35 }, (_, i) => i).filter(i => i % 8 !== 7);
const hEdges = [1018, 1285, 1551, 2023, 2495, 2966];
const vTicks = Array.from({ length: 27 }, (_, i) => i).filter(i => i % 8 !== 7);
const vMarks = [21, 73, 394, 448, 555];

function HRuler() {
  return (
    <svg width="1992" height="47" viewBox="0 0 1992 47" className="block bg-white">
      {hTicks.map(i => {
        const x = 56 + 55.6 * i;
        const big = i % 8 === 3;
        return <line key={i} x1={x} x2={x} y1={big ? 19 : 20} y2={big ? 29 : 27} stroke="#222" strokeWidth={big ? 3 : 2.5} />;
      })}
      {hEdges.map(e => <line key={e} x1={e - 998} x2={e - 998} y1="29" y2="45" stroke="#3a4047" strokeWidth="3" />)}
      {[['50', 446], ['100', 890], ['150', 1336], ['200', 1781]].map(([t, x]) => (
        <text key={t} x={x} y="27" fontSize="19" textAnchor="middle" fill="#222" fontFamily="Inter, sans-serif">{t}</text>
      ))}
    </svg>
  );
}

function VRuler() {
  return (
    <svg width="48" height="1486" viewBox="0 0 48 1486" className="block bg-white shrink-0">
      {vTicks.map(i => {
        const y = 55 + 55.5 * i;
        const big = i % 8 === 3;
        return <line key={i} x1={big ? 19 : 21} x2="28" y1={y} y2={y} stroke="#222" strokeWidth="3" />;
      })}
      {vMarks.map(y => <line key={y} x1="28" x2="46" y1={y} y2={y} stroke="#3a4047" strokeWidth="3" />)}
      {[['50', 446], ['100', 890], ['150', 1334]].map(([t, y]) => (
        <text key={t} transform={`translate(31 ${y}) rotate(-90)`} fontSize="18" textAnchor="middle" fill="#222" fontFamily="Inter, sans-serif">{t}</text>
      ))}
    </svg>
  );
}

const tc = 'border-[3px] border-black text-[45px] px-[6px] py-0 text-black';
const hd = `${tc} text-center leading-[52px] !px-0 whitespace-nowrap`;
const rw = `${tc} leading-[50px]`;

function Schedule() {
  return (
    <div className="relative ml-[15px] mt-[16px] w-[1949px] font-['Liberation_Sans',Arial,sans-serif]">
      <table className="w-[1949px] table-fixed border-collapse">
        <colgroup>
          <col className="w-[266px]" /><col className="w-[266px]" /><col className="w-[470px]" /><col className="w-[473px]" /><col className="w-[474px]" />
        </colgroup>
        <tbody>
          <tr className="h-[52px]"><td colSpan={5} className={`${tc} text-center leading-[48px]`}>Kondtional</td></tr>
          <tr className="h-[320px]">
            <td className={`${hd} tracking-[-0.7px]`}>Element ID</td>
            <td className={`${hd} tracking-[-1px]`}>Name</td>
            <td className={hd}>Schicht/Komponenten<br />Oberflächenbereich<br />(brutto)</td>
            <td className={hd}>Schicht/Komponenten<br />Oberflächenbereich<br />(konditional)</td>
            <td className={hd}>Schicht/Komponenten<br />Oberflächenbereich<br />(netto)</td>
          </tr>
          <tr className="h-[55px]">
            <td className={`${rw} tracking-[-0.8px]`}>RD-001</td><td className={rw}>Estrich</td><td className={rw}>3,750</td><td className={rw}>3,750</td><td className={`${rw} !pl-[5px]`}>3,740</td>
          </tr>
          <tr className="h-[105px]">
            <td className={`${rw} tracking-[-0.8px]`}>RD-001</td><td className={rw}>Trittschalldä<br />mmung</td><td className={rw}>3,750</td><td className={rw}>3,750</td><td className={`${rw} !pl-[5px]`}>3,740</td>
          </tr>
        </tbody>
      </table>
      <svg width="500" height="512" viewBox="0 0 500 512" className="absolute left-[994px] top-[46px] pointer-events-none">
        <defs>
          <filter id="rough" x="-5%" y="-5%" width="110%" height="110%">
            <feTurbulence type="fractalNoise" baseFrequency="0.35" numOctaves="2" seed="4" />
            <feDisplacementMap in="SourceGraphic" scale="5" />
          </filter>
        </defs>
        <g filter="url(#rough)" fill="none" stroke="#ff4ce6" strokeWidth="9">
          <rect x="7" y="7" width="484" height="490" />
          <line x1="135" x2="373" y1="250" y2="250" />
        </g>
      </svg>
    </div>
  );
}

function CanvasArea() {
  return (
    <div className="flex flex-col w-[2090px] h-full bg-[#ececec] shrink-0">
      <div className="flex items-center h-[74px] shrink-0 pl-[12px]">
        <div className="flex items-center justify-center w-[56px] h-[48px] rounded-[10px] bg-white shadow-[0_1px_2px_rgba(0,0,0,0.25)]">
          <S w={32} h={34} sw={2} d="M13 3 H19 L20 8 L25 6 L29 11 L26 15 L29 21 L25 26 L20 25 L19 31 H13 L12 25 L7 26 L3 21 L6 15 L3 11 L7 6 L12 8 Z"><circle cx="16" cy="16" r="5" /></S>
          <Caret />
        </div>
        <div className="flex items-center justify-center w-[76px] h-[48px] ml-[24px] rounded-[10px] bg-white shadow-[0_1px_2px_rgba(0,0,0,0.25)]">
          <S w={36} h={40} sw={2.5} d="M20 14 V4 H3 V26 H14"><rect x="14" y="15" width="18" height="20" strokeWidth="2" /><rect x="11" y="12" width="6" height="6" fill={DK} /><rect x="29" y="12" width="6" height="6" fill={DK} /><rect x="11" y="32" width="6" height="6" fill={DK} /><rect x="29" y="32" width="6" height="6" fill={DK} /></S>
        </div>
        <div className="flex items-center justify-center w-[76px] h-[48px] ml-[14px] rounded-[10px] bg-white shadow-[0_1px_2px_rgba(0,0,0,0.25)]">
          <S w={38} h={42} sw={2} d="M4 8 L14 2 L24 8 V18 L4 18 Z M4 8 L14 13 L24 8 M14 13 V18"><rect x="14" y="20" width="18" height="16" strokeWidth="2.5" /><rect x="11" y="18" width="6" height="6" fill={DK} /><rect x="28" y="18" width="6" height="6" fill={DK} /><rect x="12" y="33" width="6" height="6" fill={DK} /><rect x="28" y="33" width="6" height="6" fill={DK} /></S>
        </div>
        <span className="ml-auto text-[22px] text-[#333] whitespace-nowrap">Gewählt: 0&nbsp;&nbsp;Bearbeitbar: 0</span>
        <div className="flex items-center justify-center w-[333px] h-[40px] ml-[32px] mr-[4px] mb-[2px] rounded-[10px] bg-white text-[22px] text-[#333] shadow-[0_1px_2px_rgba(0,0,0,0.25)]">Schema-Einstellungen...</div>
      </div>
      <div className="flex h-[47px] shrink-0">
        <div className="flex items-center justify-center w-[44px] h-[45px] ml-[12px] mt-[1px] rounded-[10px] bg-white shadow-[0_1px_2px_rgba(0,0,0,0.25)] shrink-0">
          <S w={38} h={40} c={DK} sw={2} d="M16 12 V4 M12 8 L16 3 L20 8 M28 25 H36 M32 21 L37 25 L32 29"><path d="M3 17 H25 V37 H3 Z M3 24 H25 M3 31 H25 M11 17 V37" stroke={BL} /></S>
        </div>
        <div className="ml-[2px]"><HRuler /></div>
      </div>
      <div className="flex h-[1486px] shrink-0 pl-[10px]">
        <VRuler />
        <div className="w-[1992px] h-full shrink-0 bg-white border-l-[3px] border-t-[3px] border-r-[3px] border-b-[4px] border-l-[#8d8d8d] border-t-[#9a9a9a] border-r-[#7c7c7c] border-b-[#6b6b6b]">
          <Schedule />
        </div>
        <div className="w-[26px] h-full ml-[8px] bg-[#f7f7f7]" />
      </div>
      <div className="flex h-[37px] shrink-0 pl-[11px]">
        <div className="flex items-center justify-center w-[96px] h-[35px] rounded-[8px] bg-white text-[22px] text-[#333] shadow-[0_1px_2px_rgba(0,0,0,0.2)] shrink-0">139%</div>
        <div className="flex items-center justify-center w-[27px] h-[35px] ml-[4px] rounded-[8px] bg-white shadow-[0_1px_2px_rgba(0,0,0,0.2)] shrink-0"><Caret /></div>
        <div className="flex items-center justify-center w-[48px] h-[35px] ml-[4px] rounded-[8px] bg-white shadow-[0_1px_2px_rgba(0,0,0,0.2)] shrink-0">
          <S w={40} h={20} sw={2} d="M2 2 V18 M38 2 V18 M4 10 H36 M10 5 L4 10 L10 15 M30 5 L36 10 L30 15" />
        </div>
        <div className="w-[1869px] h-[27px] bg-[#f8f8f8]" />
      </div>
    </div>
  );
}

function TabsRow() {
  return (
    <div className="flex h-[45px] pt-[2px] bg-[#e6e6e6] shrink-0 text-[22px] text-[#3a3a3a]">
      <div className="flex items-center w-[67px] h-[43px] bg-[#e6e6e6] shrink-0 pl-[17px]">
        <S w={36} h={30} sw={2.5} d="M1 1 H15 V12 H1 Z M21 1 H35 V12 H21 Z M1 18 H15 V29 H1 Z M21 18 H35 V29 H21 Z" />
      </div>
      <div className="flex items-center justify-center gap-[8px] w-[601px] h-[43px] border-l-2 border-[#bcbcbc] shrink-0">
        <S w={36} h={32} c={BL} sw={2.5} d="M2 2 H17 V13 H34 V30 H2 Z M8 2 V9 L12 3" />
        <span>0. EG [0. EG]</span>
      </div>
      <div className="flex items-center justify-center gap-[11px] w-[601px] h-[43px] border-l-2 border-[#bcbcbc] shrink-0">
        <S w={30} h={34} sw={2.5} d="M3 6 L26 1 V33 L3 28 Z M26 1 L29 5 V28 L26 33" />
        <span className="whitespace-nowrap">[3D / Auswahl, Geschoss 0]</span>
      </div>
      <div className="flex items-center justify-center gap-[12px] w-[600px] h-[43px] bg-white shrink-0">
        <S w={26} h={34} sw={3} d="M2 2 H24 V32 H2 Z M2 10 H24 M2 17 H24 M2 25 H24 M9 2 V32 M17 2 V32" />
        <span>[0 Kondtional]</span>
      </div>
      <div className="w-[638px] h-[43px] bg-[#e3e3e3] shrink-0" />
      <div className="flex items-center justify-center gap-[14px] w-[100px] h-[43px] bg-[#ececec] shrink-0">
        <S w={46} h={32} sw={2} d="M3 22 V12 L14 3 L28 8 L32 22 Z M18 5 V22 M34 17 V26"><path d="M38 17 H44 M38 25 H44" strokeWidth="4" /></S>
        <Chev />
      </div>
    </div>
  );
}

const Tree = ({ d, children, w = 38 }: { d?: string; children?: ReactNode; w?: number }) => <S w={w} h={38} sw={2} d={d}>{children}</S>;
const storey = <Tree d="M2 2 H18 V16 H35 V34 H2 Z M8 2 V9 L12 3" />;
const tableIc = <Tree d="M4 3 H32 V35 H4 Z M4 13 H32 M4 24 H32 M13 3 V35 M23 3 V35" />;

const treeRows: { t: string; pad: string; ic: ReactNode; gap?: string; chev?: 'down' | 'right'; sel?: boolean }[] = [
  { t: '0. EG', pad: 'w-[95px]', ic: storey },
  { t: '-1. UG', pad: 'w-[95px]', ic: storey },
  { t: 'Schnitte', pad: 'w-[66px]', ic: <Tree d="M3 12 L20 3 L36 12 M3 12 H36 M3 14 V34 H35 V14"><rect x="3" y="14" width="32" height="20" fill="#ececec" /></Tree> },
  { t: 'Ansichten', pad: 'w-[66px]', ic: <Tree d="M3 14 L19 3 L35 14 V34 H3 Z"><path d="M3 14 L19 3 L35 14 V34 H3 Z" fill="#ececec" /></Tree> },
  { t: 'Innenansichten', pad: 'w-[66px]', ic: <Tree d="M3 3 H35 V33 H3 Z M9 10 H22 V33 M14 10 V33 M24 9 H33 V20 H24 Z" /> },
  { t: 'Arbeitsblätter', pad: 'w-[66px]', ic: <Tree d="M3 4 H27 L35 12 V34 H3 Z M27 4 V12 H35 M7 28 L20 14 L24 17 L11 31 H7 Z M14 31 H33" /> },
  { t: 'Details', pad: 'w-[66px]', ic: <Tree d="M19 2 V36 M19 14 H34 M19 24 H34 M10 8 V30"><circle cx="19" cy="19" r="17" /></Tree> },
  { t: '3D-Dokumente', pad: 'w-[66px]', ic: <Tree d="M3 4 H27 L35 12 V34 H3 Z M27 4 V12 H35 M9 16 L14 12 H25 V26 L20 31 H9 Z M9 16 H20 V31 M20 16 L25 12" /> },
  { t: '3D', pad: 'w-[66px]', chev: 'down', ic: <Tree d="M3 6 L28 1 L33 6 V30 L28 37 L3 30 Z M28 1 V37"><path d="M3 6 L28 1 V37 L3 30 Z" fill="#ececec" /></Tree> },
  { t: 'Allgemeine Perspektive', pad: 'w-[95px]', ic: <Tree d="M3 6 L28 1 L33 6 V30 L28 37 L3 30 Z M28 1 V37" /> },
  { t: 'Allgemeine Axonometrie', pad: 'w-[95px]', ic: <Tree d="M3 10 L20 2 L33 8 V30 L17 37 L3 30 Z M3 10 L17 16 L33 8 M17 16 V37" /> },
  { t: '00 Neue Animationsroute', pad: 'w-[95px]', ic: <Tree d="M4 12 H26 V27 H4 Z M26 18 L34 12 V27 L26 22 M2 34 C6 34 8 31 8 27 M20 12 L18 4 H16" /> },
  { t: 'Auswertungen', pad: 'w-[66px]', chev: 'down', ic: tableIc },
  { t: 'Elemente', pad: 'w-[95px]', chev: 'right', ic: <S w={38} h={38} sw={2} d="M2 13 H36 V25 H2 Z M8 25 L18 13 M16 25 L26 13 M24 25 L34 13" /> },
  { t: 'Komponenten', pad: 'w-[95px]', chev: 'down', gap: 'mr-[8px]', ic: <Tree w={36} d="M2 30 H34 V22 H2 Z M6 22 V14 H30 V22 M12 14 V8 H24 V14 M18 22 V30 M12 14 V22 M24 14 V22" /> },
  { t: '0 Kondtional', pad: 'w-[124px]', gap: 'mr-[4px]', ic: tableIc, sel: true },
  { t: '10-01 Rohbau - Bauteile', pad: 'w-[124px]', gap: 'mr-[4px]', ic: tableIc },
  { t: '10-02 Ausbau - Fußbodenaufbau', pad: 'w-[124px]', gap: 'mr-[4px]', ic: tableIc },
];

function RightPanel() {
  return (
    <div className="flex flex-col w-[538px] h-full bg-[#ececec] border-l-2 border-[#e2e2e2] shrink-0 text-[22px] text-[#222]">
      <div className="w-[140px] h-[2px] mt-[9px] ml-[198px] bg-[#bdbdbd] shrink-0" />
      <div className="flex items-center h-[57px] mt-[9px] pl-[6px] shrink-0">
        <div className="flex items-center justify-center w-[56px] h-[57px] rounded-[10px] bg-[#bbbbbe] shrink-0">
          <S w={38} h={34} sw={2.5} d="M2 32 V16 L13 3 L29 8 L36 18 V32 Z M13 3 L22 16 V32" />
        </div>
        <div className="w-[2px] h-[40px] ml-[15px] bg-[#d2d2d2]" />
        <div className="ml-[21px]"><S w={36} h={36} sw={2.5} d="M2 2 H34 V34 H2 Z M6 28 V16 L14 6 L27 10 L31 18 V28 Z M14 6 L20 16 V28" /></div>
        <div className="ml-[24px]"><S w={36} h={36} sw={2.5} d="M2 34 V8 L10 2 V26 L2 34 H34 V8 H10 M24 24 H34 M24 24 V34 M24 29 H34" /></div>
        <div className="ml-[24px]"><S w={36} h={38} sw={2.5} d="M3 3 H24 V28 H3 Z M3 10 H24 M29 6 V32 H9 M34 11 V37 H14" /></div>
        <div className="flex items-center justify-center gap-[10px] w-[66px] h-[43px] ml-auto mr-[5px] mb-[6px] rounded-[10px] bg-white shadow-[0_1px_2px_rgba(0,0,0,0.2)]">
          <S w={26} h={22} sw={2.5} d="M1 3 H25 M1 11 H25 M1 19 H25" />
          <Caret />
        </div>
      </div>
      <div className="flex items-center h-[41px] mt-[14px] mx-[6px] bg-white pl-[14px] shadow-[0_1px_1px_rgba(0,0,0,0.25)] shrink-0">
        <S w={28} h={30} sw={2.5} d="M19 20 L26 28"><circle cx="12" cy="13" r="10" /></S>
        <span className="ml-[12px] text-[#bdbdbd]">Projektmappe durchsuchen</span>
      </div>
      <div className="flex mt-[7px] h-[851px] shrink-0">
        <div className="w-[506px] h-full bg-white overflow-hidden shrink-0">
          {treeRows.map(r => (
            <div key={r.t} className={`flex items-center h-[48px] ${r.sel ? 'bg-[#d9d9d9]' : ''}`}>
              <div className={`flex justify-end items-center pr-[13px] shrink-0 ${r.pad}`}>
                {r.chev === 'down' && <S w={18} h={12} c="#8a8a8a" sw={2.5} d="M2 2 L9 10 L16 2" />}
                {r.chev === 'right' && <S w={12} h={18} c="#8a8a8a" sw={2.5} d="M2 2 L10 9 L2 16" />}
              </div>
              <div className={`shrink-0 ${r.gap ?? 'mr-[6px]'}`}>{r.ic}</div>
              <span className={`whitespace-nowrap ${r.sel ? 'font-bold text-black' : ''}`}>{r.t}</span>
            </div>
          ))}
        </div>
        <div className="w-[30px] h-full bg-[#f7f7f7] shrink-0">
          <div className="w-[15px] h-[388px] mt-[72px] ml-[9px] rounded-full bg-[#bfbfbf]" />
        </div>
      </div>
      <div className="h-[29px] bg-[#f7f7f7] shrink-0 pl-[6px] pt-[9px]">
        <div className="w-[415px] h-[16px] rounded-full bg-[#bfbfbf]" />
      </div>
      <div className="flex items-center h-[70px] pl-[22px] gap-[34px] shrink-0">
        <S w={26} h={26} c={LB} sw={2.5} d="M13 7 V19 M7 13 H19"><circle cx="13" cy="13" r="11.5" /></S>
        <S w={28} h={18} c={BL} sw={2.5} d="M1 1 H27 V17 H1 Z M6 7 H8 M6 12 H8 M12 7 H22 M12 12 H22" />
        <S w={26} h={26} c="#f43a28" sw={3.5} d="M2 2 L24 24 M24 2 L2 24" />
      </div>
      <div className="flex items-center h-[42px] mx-[4px] rounded-[6px] bg-[#d6d6d6] pl-[12px] shrink-0">
        <TriDown />
        <span className="ml-[18px]">Beschreibungen</span>
      </div>
      <div className="flex items-center h-[34px] mt-[12px] pl-[8px] pr-[3px] shrink-0">
        <S w={26} h={22} sw={2} d="M1 1 H25 V21 H1 Z M1 8 H25 M1 14 H25 M9 1 V21 M17 1 V21" />
        <Field v="0" className="w-[114px] h-[34px] ml-[12px]" />
        <Field v="Kondtional" className="flex-1 h-[34px] ml-[10px]" />
      </div>
      <div className="flex items-center justify-center h-[40px] mt-[7px] mx-[4px] rounded-[10px] bg-white shadow-[0_1px_2px_rgba(0,0,0,0.2)] shrink-0">Einstellungen...</div>
      <div className="h-[2px] mt-[7px] bg-[#e2e2e2] shrink-0" />
      <div className="w-[140px] h-[2px] mt-[9px] ml-[198px] bg-[#bdbdbd] shrink-0" />
      <div className="flex h-[57px] mt-[8px] ml-[6px] mr-[5px] gap-[4px] shrink-0">
        <div className="flex items-center justify-center w-[56px] rounded-[10px] bg-[#f4f4f4] shadow-[0_1px_1px_rgba(0,0,0,0.12)] shrink-0">
          <S w={36} h={32} c={GR} sw={2.5}><path d="M34 10 V30 H10" stroke={LB} /><rect x="2" y="2" width="28" height="24" rx="2" /></S>
        </div>
        <div className="flex items-center flex-1 rounded-[10px] bg-[#f4f4f4] shadow-[0_1px_1px_rgba(0,0,0,0.12)] pl-[6px] pr-[12px] text-[#b5b5b5]">
          <S w={36} h={30} c={GR} sw={2} d="M2 2 H18 V14 H34 V28 H2 Z M8 2 V8 L12 3" />
          <span className="ml-[9px]">0. EG</span>
          <div className="ml-auto"><Caret c="#8a8a8a" /></div>
        </div>
      </div>
      <div className="flex items-center h-[60px] mt-[7px] pl-[15px] shrink-0">
        <S w={38} h={36} c={GR} sw={2.5} d="M2 2 H26 V22 H2 Z M7 7 L19 17 M7 7 H13 M7 7 V13 M19 17 H13 M19 17 V11"><path d="M30 12 H36 V34 H12 V26" stroke={LB} /></S>
        <div className="ml-[83px]"><S w={38} h={36} c={LB} sw={2.5} d="M22 20 H2 V2 H24 V12"><path d="M24 16 V34 M14 25 H36 M20 20 L24 15 L28 20 M20 30 L24 35 L28 30 M18 21 L13 25 L18 29 M32 21 L37 25 L32 29" stroke="#8a8a8a" /></S></div>
        <div className="ml-[22px]"><S w={38} h={36} c={LB} sw={2.5} d="M3 12 L22 4 L30 16 L12 28 Z"><path d="M36 18 C36 24 32 30 24 30 M20 27 L24 31 L28 34 M26 24 L32 20" stroke="#8a8a8a" /></S></div>
        <div className="ml-[22px]"><S w={38} h={36} c={LB} sw={2.5} d="M2 2 H28 V20 H2 Z M10 26 H36 V16"><path d="M14 6 L8 11 L14 15 M8 11 C20 6 30 14 28 28" stroke="#8a8a8a" /></S></div>
        <div className="ml-[22px]"><S w={36} h={36} c="#8a8a8a" sw={2.5} d="M10 18 C10 12 18 8 26 12 M22 8 L26 12 L21 15 M26 18 C26 24 18 28 10 24 M14 28 L10 24 L15 21"><circle cx="18" cy="18" r="16" /></S></div>
      </div>
      <div className="h-[2px] mt-[13px] bg-[#d9d9d9] shrink-0" />
      <div className="h-[28px] mt-[11px] ml-[6px] leading-[28px] text-[#8c8c8c] shrink-0">Transparentpause:</div>
      <div className="flex items-center h-[56px] mt-[11px] pl-[6px] shrink-0">
        <div className="flex items-center justify-center gap-[8px] w-[56px] h-[56px] rounded-[10px] bg-[#f4f4f4] shadow-[0_1px_1px_rgba(0,0,0,0.12)] shrink-0">
          <div className="w-[24px] h-[22px] bg-[#fb8d86]" />
          <Caret c="#8a8a8a" />
        </div>
        <Slider />
        <div className="flex items-center justify-center w-[26px] h-[56px] rounded-[10px] bg-[#f4f4f4] shadow-[0_1px_1px_rgba(0,0,0,0.12)] shrink-0 ml-[5px]"><Caret c="#8a8a8a" /></div>
      </div>
      <div className="h-[28px] mt-[11px] ml-[6px] leading-[28px] text-[#8c8c8c] shrink-0">Aktiv:</div>
      <div className="flex items-center h-[56px] mt-[11px] pl-[6px] shrink-0">
        <div className="flex items-center justify-center gap-[8px] w-[56px] h-[56px] rounded-[10px] bg-[#f4f4f4] shadow-[0_1px_1px_rgba(0,0,0,0.12)] shrink-0">
          <svg width="26" height="24" viewBox="0 0 26 24">
            <path d="M13 12 L13 1 A12 11 0 0 0 1.5 15 Z" fill="#7dc08f" />
            <path d="M13 12 L13 1 A12 11 0 0 1 24.5 15 Z" fill="#f08b70" />
            <path d="M13 12 L24.5 15 A12 11 0 0 1 1.5 15 Z" fill="#8ab2ee" />
            <ellipse cx="13" cy="12" rx="12" ry="11" fill="none" stroke="#8a8a8a" strokeWidth="1.5" />
          </svg>
          <Caret c="#8a8a8a" />
        </div>
        <Slider />
      </div>
      <div className="h-[2px] mt-[15px] bg-[#d9d9d9] shrink-0" />
      <div className="flex items-center h-[70px] pl-[76px] shrink-0">
        <S w={38} h={36} c={LB} sw={2.5} d="M20 22 H2 V2 H24 V10"><path d="M14 34 L8 24 C10 22 12 24 14 26 V14 M14 18 L18 14 V24 M22 14 V24 M26 16 V24 M30 20 L32 28 L28 36" stroke="#8a8a8a" strokeWidth="2" /></S>
        <div className="ml-[22px]"><S w={38} h={36} c="#8a8a8a" sw={2.5} d="M22 4 H2 V22 H10"><rect x="10" y="12" width="26" height="20" stroke={LB} /></S></div>
        <div className="ml-[22px]"><S w={38} h={36} c="#8a8a8a" sw={2.5} d="M18 6 H2 V30 H18 M18 1 V35 M12 14 L8 18 L12 22 M24 14 L28 18 L24 22"><path d="M20 6 H36 V30 H20" stroke={LB} /></S></div>
        <div className="ml-[22px]"><S w={38} h={36} c="#8a8a8a" sw={2} d="M3 2 H29 V22 H3 Z M3 10 L11 2 M3 18 L19 2 M8 22 L28 2 M18 22 L29 12 M8 30 C14 20 32 20 36 26 C30 34 14 34 8 30 M12 34 L34 20" /></div>
      </div>
    </div>
  );
}

function Slider() {
  return (
    <div className="relative flex items-center w-[428px] h-[30px] ml-[8px] shrink-0">
      <div className="flex-1 h-[10px] bg-[#e2e2e2] flex justify-between px-[2px]">
        {Array.from({ length: 10 }, (_, i) => <div key={i} className="w-[3px] h-[18px] -mt-[4px] bg-[#dcdcdc]" />)}
      </div>
      <div className="absolute right-[1px] top-[-1px] w-[16px] h-[32px] rounded-[8px] bg-[#f7f7f7] shadow-[0_1px_1px_rgba(0,0,0,0.2)]" />
    </div>
  );
}

export default function App() {
  return (
    <div className="w-[3680px] h-[2288px] bg-white pt-[75px] pl-[110px] overflow-hidden font-['Inter',sans-serif]">
      <div className="flex flex-col w-[3458px] h-[2063px] rounded-[24px] overflow-hidden bg-[#ececec] shadow-[0_0_0_1px_#c9c9c9,0_50px_110px_rgba(0,0,0,0.42)]">
        <div className="relative flex items-center justify-center h-[58px] pb-[2px] bg-[#f1f1f0] border-b-2 border-[#d2d2d2] shrink-0">
          <div className="absolute left-[18px] top-[17px] flex gap-[16px]">
            <div className="w-[24px] h-[24px] rounded-full bg-[#ff5f57]" />
            <div className="w-[24px] h-[24px] rounded-full bg-[#febc2e]" />
            <div className="w-[24px] h-[24px] rounded-full bg-[#34c749]" />
          </div>
          <div className="flex items-center gap-[12px]">
            <S w={24} h={28} c="#bcbcbc" sw={1.5} d="M2 2 H16 L22 8 V26 H2 Z"><path d="M6 12 L10 4 L14 10" stroke="#5a6fb0" /><path d="M7 16 H17 V23 H7 Z M12 16 V23" /></S>
            <span className="text-[26px] font-bold text-[#3a3a3a]">Ohne Titel</span>
          </div>
        </div>
        <ToolbarOne />
        <ToolbarTwo />
        <HauptRow />
        <div className="flex h-[1689px] shrink-0 overflow-hidden">
          <Toolbox />
          <div className="flex flex-col w-[2607px] h-full shrink-0">
            <TabsRow />
            <div className="flex h-[1644px]">
              <StylePanel />
              <div className="relative w-[10px] h-full bg-[#dcdcdc] shrink-0">
                <svg width="10" height="14" viewBox="0 0 10 14" className="absolute left-0 top-[832px]"><path d="M10 0 V14 L0 7 Z" fill="#8a8a8a" /></svg>
              </div>
              <CanvasArea />
            </div>
          </div>
          <RightPanel />
        </div>
        <div className="flex items-center h-[48px] pb-[4px] border-t-2 border-[#e2e2e2] pl-[16px] pr-[24px] shrink-0">
          <span className="text-[22px] text-[#222] whitespace-nowrap">Klicken Sie mit dem Cursor auf ein Element oder ziehen Sie einen Auswahlbereich auf. Drücken Sie für Morphbearbeitung Strg/Ctrl+Umsch, um zwischen Element-/Unterelement-Auswahl zu wechseln.</span>
          <div className="ml-auto"><S w={34} h={28} sw={2.5} d="M2 6 H22 M2 2 H22 V8 M2 2 V22 H4 M6 10 H32 V26 H6 Z M6 10 V14 H32" /></div>
          <div className="w-[2px] h-[28px] ml-[20px] bg-[#b5b5b5]" />
          <span className="ml-[21px] text-[26px] text-[#3c4248] tracking-[-0.5px] whitespace-nowrap">GRAPHISOFT <span className="font-light text-[#777]">ID</span></span>
        </div>
      </div>
    </div>
  );
}
